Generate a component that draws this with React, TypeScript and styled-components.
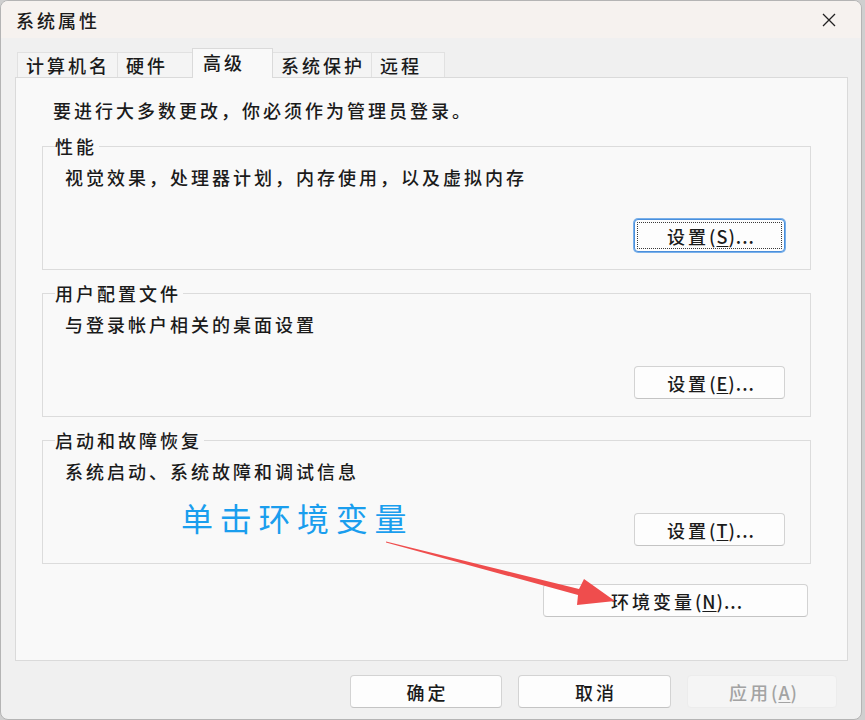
import React, { FC } from 'react';
import styled, { createGlobalStyle, css } from 'styled-components';

const GlobalStyle = createGlobalStyle`
  html, body {
    margin: 0;
    padding: 0;
    background: #cfcfcf;
  }
  * {
    box-sizing: border-box;
  }
`;

const FONT = `'Noto Sans CJK SC', 'Noto Sans', sans-serif`;

const Window = styled.div`
  position: relative;
  width: 862px;
  height: 720px;
  display: flex;
  flex-direction: column;
  background: #f0f0f0;
  border: 1px solid #b4b4b4;
  border-radius: 8px;
  overflow: hidden;
  font-family: ${FONT};
  font-size: 18px;
  font-weight: 500;
  letter-spacing: 3px;
  color: #1b1b1b;
`;

const TitleBar = styled.div`
  height: 37px;
  flex: none;
  display: flex;
  align-items: center;
  justify-content: space-between;
  padding: 0 20px 0 15px;
  background: #f6f2ef;
`;

const Title = styled.span`
  line-height: 24px;
`;

const CloseButton = styled.div`
  width: 24px;
  height: 24px;
  display: flex;
  align-items: center;
  justify-content: center;
`;

const Body = styled.div`
  flex: 1;
  display: flex;
  flex-direction: column;
  padding: 11px 13px 0 14px;
`;

const TabStrip = styled.div`
  height: 28px;
  display: flex;
  align-items: flex-end;
  padding-left: 2px;
`;

const Tab = styled.div<{ $width: number; $active?: boolean }>`
  position: relative;
  width: ${({ $width }) => $width}px;
  height: 25px;
  padding-left: 8px;
  display: flex;
  align-items: center;
  background: #f4f4f4;
  border: 1px solid #e1e1e1;
  border-bottom: none;
  margin-right: -1px;
  line-height: 24px;

  ${({ $active }) =>
    $active &&
    css`
      z-index: 1;
      height: 30px;
      margin-bottom: -1px;
      padding-left: 10px;
      padding-bottom: 3px;
      background: #f9f9f9;
      border-color: #dadada;
    `}
`;

const Panel = styled.div`
  height: 584px;
  display: flex;
  flex-direction: column;
  padding: 20px 36px 0 26px;
  background: #f9f9f9;
  border: 1px solid #dadada;
`;

const Notice = styled.div`
  line-height: 24px;
  padding-left: 11px;
  margin-bottom: 13px;
`;

const Group = styled.fieldset`
  margin: 0 0 12px;
  padding: 0 25px 17px 22px;
  border: 1px solid #dcdcdc;
  display: flex;
  flex-direction: column;
`;

const Legend = styled.legend`
  margin-left: -10px;
  padding: 0 2px 0 0;
  line-height: 22px;
`;

const Description = styled.div`
  line-height: 24px;
  margin-top: 8px;
`;

const ButtonRow = styled.div<{ $top?: number }>`
  display: flex;
  justify-content: flex-end;
  margin-top: ${({ $top = 30 }) => $top}px;
`;

const Button = styled.button<{ $width: number; $focused?: boolean; $disabled?: boolean }>`
  width: ${({ $width }) => $width}px;
  height: 33px;
  padding: 0 0 0 3px;
  background: #fdfdfd;
  border: 1px solid #d3d3d3;
  border-bottom-color: #c4c4c4;
  border-radius: 4px;
  font-family: ${FONT};
  font-size: 18px;
  font-weight: 500;
  letter-spacing: 3px;
  color: #1b1b1b;
  line-height: 24px;
  cursor: default;

  ${({ $focused }) =>
    $focused &&
    css`
      border: 1px solid #4a8fdc;
      box-shadow: 0 0 0 1px #79b0ea;
      outline: 1px dotted #3a3a3a;
      outline-offset: -4px;
    `}

  ${({ $disabled }) =>
    $disabled &&
    css`
      background: #f5f5f5;
      border-color: #ececec;
      color: #a3a3a3;
    `}
`;

const Mnemonic = styled.span`
  letter-spacing: 1px;

  u {
    text-underline-offset: 2px;
  }
`;

const EnvRow = styled.div`
  display: flex;
  justify-content: flex-end;
  margin-top: 8px;
  padding-right: 3px;
`;

const Footer = styled.div`
  display: flex;
  justify-content: flex-end;
  gap: 16px;
  margin-top: 14px;
  padding-right: 11px;
`;

const Annotation = styled.div`
  position: absolute;
  left: 180px;
  top: 500px;
  font-size: 32px;
  font-weight: 400;
  line-height: 32px;
  letter-spacing: 6.7px;
  color: #1a9eee;
  pointer-events: none;
`;

const ArrowLayer = styled.svg`
  position: absolute;
  left: 0;
  top: 0;
  pointer-events: none;
`;

const Label: FC<{ text: string; mnemonic: string }> = ({ text, mnemonic }) => (
  <>
    {text}
    <Mnemonic>
      (<u>{mnemonic}</u>)...
    </Mnemonic>
  </>
);

const GROUPS = [
  { title: '性能', desc: '视觉效果，处理器计划，内存使用，以及虚拟内存', key: 'S', focused: true },
  { title: '用户配置文件', desc: '与登录帐户相关的桌面设置', key: 'E' },
  { title: '启动和故障恢复', desc: '系统启动、系统故障和调试信息', key: 'T' },
];

const TABS = [
  { label: '计算机名', width: 101 },
  { label: '硬件', width: 76 },
  { label: '高级', width: 81, active: true },
  { label: '系统保护', width: 100 },
  { label: '远程', width: 74 },
];

export default function App() {
  return (
    <>
      <GlobalStyle />
      <Window>
        <TitleBar>
          <Title>系统属性</Title>
          <CloseButton>
            <svg width="14" height="14" viewBox="0 0 14 14">
              <path d="M1 1 L13 13 M13 1 L1 13" stroke="#222" strokeWidth="1.3" />
            </svg>
          </CloseButton>
        </TitleBar>
        <Body>
          <TabStrip>
            {TABS.map(tab => (
              <Tab key={tab.label} $width={tab.width} $active={tab.active}>
                {tab.label}
              </Tab>
            ))}
          </TabStrip>
          <Panel>
            <Notice>要进行大多数更改，你必须作为管理员登录。</Notice>
            {GROUPS.map(group => (
              <Group key={group.title}>
                <Legend>{group.title}</Legend>
                <Description>{group.desc}</Description>
                <ButtonRow>
                  <Button $width={151} $focused={group.focused}>
                    <Label text="设置" mnemonic={group.key} />
                  </Button>
                </ButtonRow>
              </Group>
            ))}
            <EnvRow>
              <Button $width={265}>
                <Label text="环境变量" mnemonic="N" />
              </Button>
            </EnvRow>
          </Panel>
          <Footer>
            <Button $width={152}>确定</Button>
            <Button $width={153}>取消</Button>
            <Button $width={150} $disabled>
              应用
              <Mnemonic>
                (<u>A</u>)
              </Mnemonic>
            </Button>
          </Footer>
        </Body>
        <Annotation>单击环境变量</Annotation>
        <ArrowLayer width="862" height="720" viewBox="0 0 862 720">
          <polygon
            points="385,540.5 578,588 583,578 614,600 576,604 577,594 385,541.5"
            fill="#ef4d4d"
          />
        </ArrowLayer>
      </Window>
    </>
  );
}
